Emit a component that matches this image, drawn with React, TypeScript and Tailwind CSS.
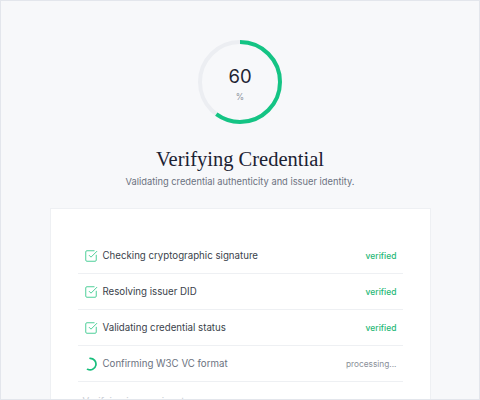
import { SquareCheckBig } from "lucide-react";

// ---------------------------------------------------------------------------
// Verification progress screen
// ---------------------------------------------------------------------------

type StepStatus = "verified" | "processing" | "pending";

interface Step {
  label: string;
  status: StepStatus;
}

const steps: Step[] = [
  { label: "Checking cryptographic signature", status: "verified" },
  { label: "Resolving issuer DID", status: "verified" },
  { label: "Validating credential status", status: "verified" },
  { label: "Confirming W3C VC format", status: "processing" },
  { label: "Verifying issuer signatures", status: "pending" },
];

function ProgressRing({ value }: { value: number }) {
  const r = 40;
  const c = 2 * Math.PI * r;
  return (
    <div className="relative h-[88px] w-[88px]">
      <svg width="88" height="88" viewBox="0 0 88 88" className="-rotate-90">
        <circle cx="44" cy="44" r={r} fill="none" stroke="#eceef2" strokeWidth="4" />
        <circle
          cx="44"
          cy="44"
          r={r}
          fill="none"
          stroke="#14c484"
          strokeWidth="4"
          strokeDasharray={c}
          strokeDashoffset={c * (1 - value / 100)}
        />
      </svg>
      <div className="absolute inset-0 flex flex-col items-center justify-center">
        <span className="mt-[4px] text-[18.5px] leading-none text-[#1f2433]">{value}</span>
        <span className="mt-[7px] text-[8.5px] leading-none text-[#8b919c]">%</span>
      </div>
    </div>
  );
}

function Spinner() {
  return (
    <svg width="14" height="14" viewBox="0 0 14 14" fill="none">
      <path
        d="M6 1.3 A5.8 5.8 0 1 1 3.6 12.3"
        stroke="#18be7c"
        strokeWidth="1.7"
        strokeLinecap="round"
      />
    </svg>
  );
}

function StepRow({ step, last }: { step: Step; last: boolean }) {
  return (
    <div
      className={`flex h-[36px] items-center pl-[6px] pr-[6px] leading-none ${
        last ? "" : "border-b border-[#eef0f3]"
      }`}
    >
      {step.status !== "pending" && (
        <div className="mr-[5px] flex w-[14px] items-center justify-center">
          {step.status === "verified" && (
            <SquareCheckBig size={14} strokeWidth={1.7} color="#4cce98" />
          )}
          {step.status === "processing" && <Spinner />}
        </div>
      )}
      <span
        className={`text-[9.7px] leading-none ${
          step.status === "verified"
            ? "text-[#3a3f4b]"
            : step.status === "processing"
            ? "text-[#6b7280]"
            : "-ml-[1px] mt-[3px] text-[#c8ccd3]"
        }`}
      >
        {step.label}
      </span>
      {step.status === "verified" && (
        <span className="ml-auto text-[8.5px] font-medium leading-none text-[#1fb877]">
          verified
        </span>
      )}
      {step.status === "processing" && (
        <span className="ml-auto text-[8.3px] leading-none text-[#8a8f99]">processing...</span>
      )}
    </div>
  );
}

export default function App() {
  return (
    <div
      className="h-[400px] w-[480px] overflow-hidden border border-[#e3e6ec] bg-[#f7f8fa]"
      style={{ fontFamily: "Inter, 'Noto Sans', sans-serif" }}
    >
      <div className="flex flex-col items-center pt-[37px]">
        <ProgressRing value={60} />
        <h1
          className="mt-[23px] text-[20.5px] leading-none text-[#1c2233]"
          style={{ fontFamily: "'Liberation Serif', serif" }}
        >
          Verifying Credential
        </h1>
        <p className="mt-[5px] text-[9.3px] text-[#6b7280]">
          Validating credential authenticity and issuer identity.
        </p>
        <div className="mt-[20px] w-[381px] border border-[#eef0f3] bg-white px-[27px] pt-[29px]">
          {steps.map((step, i) => (
            <StepRow key={step.label} step={step} last={i === steps.length - 1} />
          ))}
        </div>
      </div>
    </div>
  );
}
